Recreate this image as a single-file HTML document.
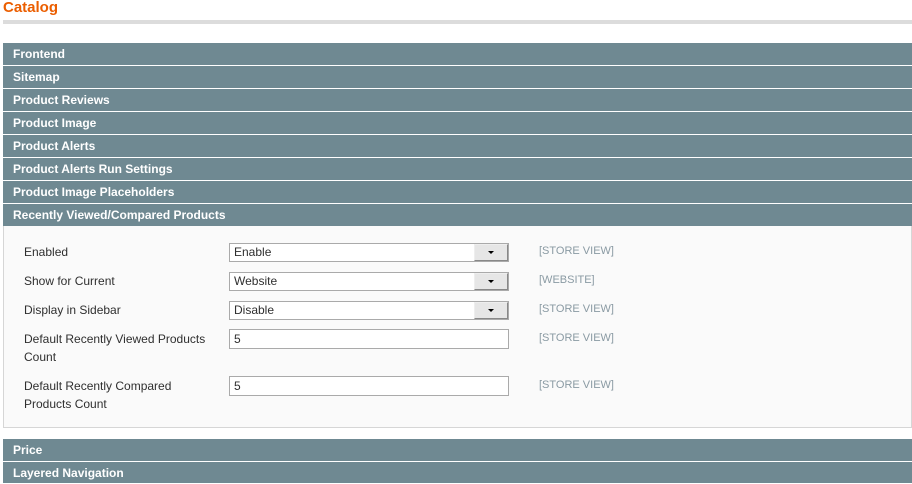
<!DOCTYPE html>
<html><head><style>
body{margin:0;width:912px;height:483px;overflow:hidden;background:#fff;font-family:"Liberation Sans",sans-serif;font-size:12px;color:#2f2f2f;position:relative}
.t{position:absolute;left:3px;top:-2px;color:#eb5e00;font-weight:bold;font-size:15px;line-height:20px}
.bar{position:absolute;left:3px;top:20px;width:909px;height:4px;background:#dcdcdc}
.h{position:absolute;left:3px;width:909px;height:22px;background:#6f8992;color:#fff;font-weight:bold;font-size:12px;line-height:22px;text-indent:10px}
.p{position:absolute;left:3px;top:226px;width:907px;height:201px;background:#fafafa;border:1px solid #d6d6d6;border-top:0}
.l{position:absolute;left:24px;line-height:18px}
.s{position:absolute;left:229px;width:278px;height:17px;border:1px solid #aaa;background:#fff;line-height:17px;text-indent:4px}
.s b{position:absolute;right:0;top:0;width:32px;height:15px;border:1px solid #888;border-top-color:#eee;border-left-color:#eee;background:#e6e6e6;text-indent:0}
.s b:after{content:"";position:absolute;left:13px;top:6px;border:3px solid transparent;border-top:3px solid #000;border-bottom:0}
.i{position:absolute;left:229px;width:274px;height:18px;border:1px solid #aaa;background:#fff;line-height:18px;padding-left:4px}
.sc{position:absolute;left:539px;color:#8a9aa3;font-size:11px;line-height:14px}
</style></head><body>
<div class="t">Catalog</div><div class="bar"></div>
<div class="h" style="top:43px">Frontend</div>
<div class="h" style="top:66px">Sitemap</div>
<div class="h" style="top:89px">Product Reviews</div>
<div class="h" style="top:112px">Product Image</div>
<div class="h" style="top:135px">Product Alerts</div>
<div class="h" style="top:158px">Product Alerts Run Settings</div>
<div class="h" style="top:181px">Product Image Placeholders</div>
<div class="h" style="top:204px">Recently Viewed/Compared Products</div>
<div class="p"></div>
<div class="l" style="top:243px">Enabled</div>
<div class="s" style="top:243px">Enable<b></b></div>
<div class="sc" style="top:244px">[STORE VIEW]</div>
<div class="l" style="top:272px">Show for Current</div>
<div class="s" style="top:272px">Website<b></b></div>
<div class="sc" style="top:273px">[WEBSITE]</div>
<div class="l" style="top:301px">Display in Sidebar</div>
<div class="s" style="top:301px">Disable<b></b></div>
<div class="sc" style="top:302px">[STORE VIEW]</div>
<div class="l" style="top:330px">Default Recently Viewed Products<br>Count</div>
<div class="i" style="top:329px">5</div>
<div class="sc" style="top:331px">[STORE VIEW]</div>
<div class="l" style="top:377px">Default Recently Compared<br>Products Count</div>
<div class="i" style="top:376px">5</div>
<div class="sc" style="top:378px">[STORE VIEW]</div>
<div class="h" style="top:439px">Price</div>
<div class="h" style="top:462px;height:21px">Layered Navigation</div>
</body></html>
